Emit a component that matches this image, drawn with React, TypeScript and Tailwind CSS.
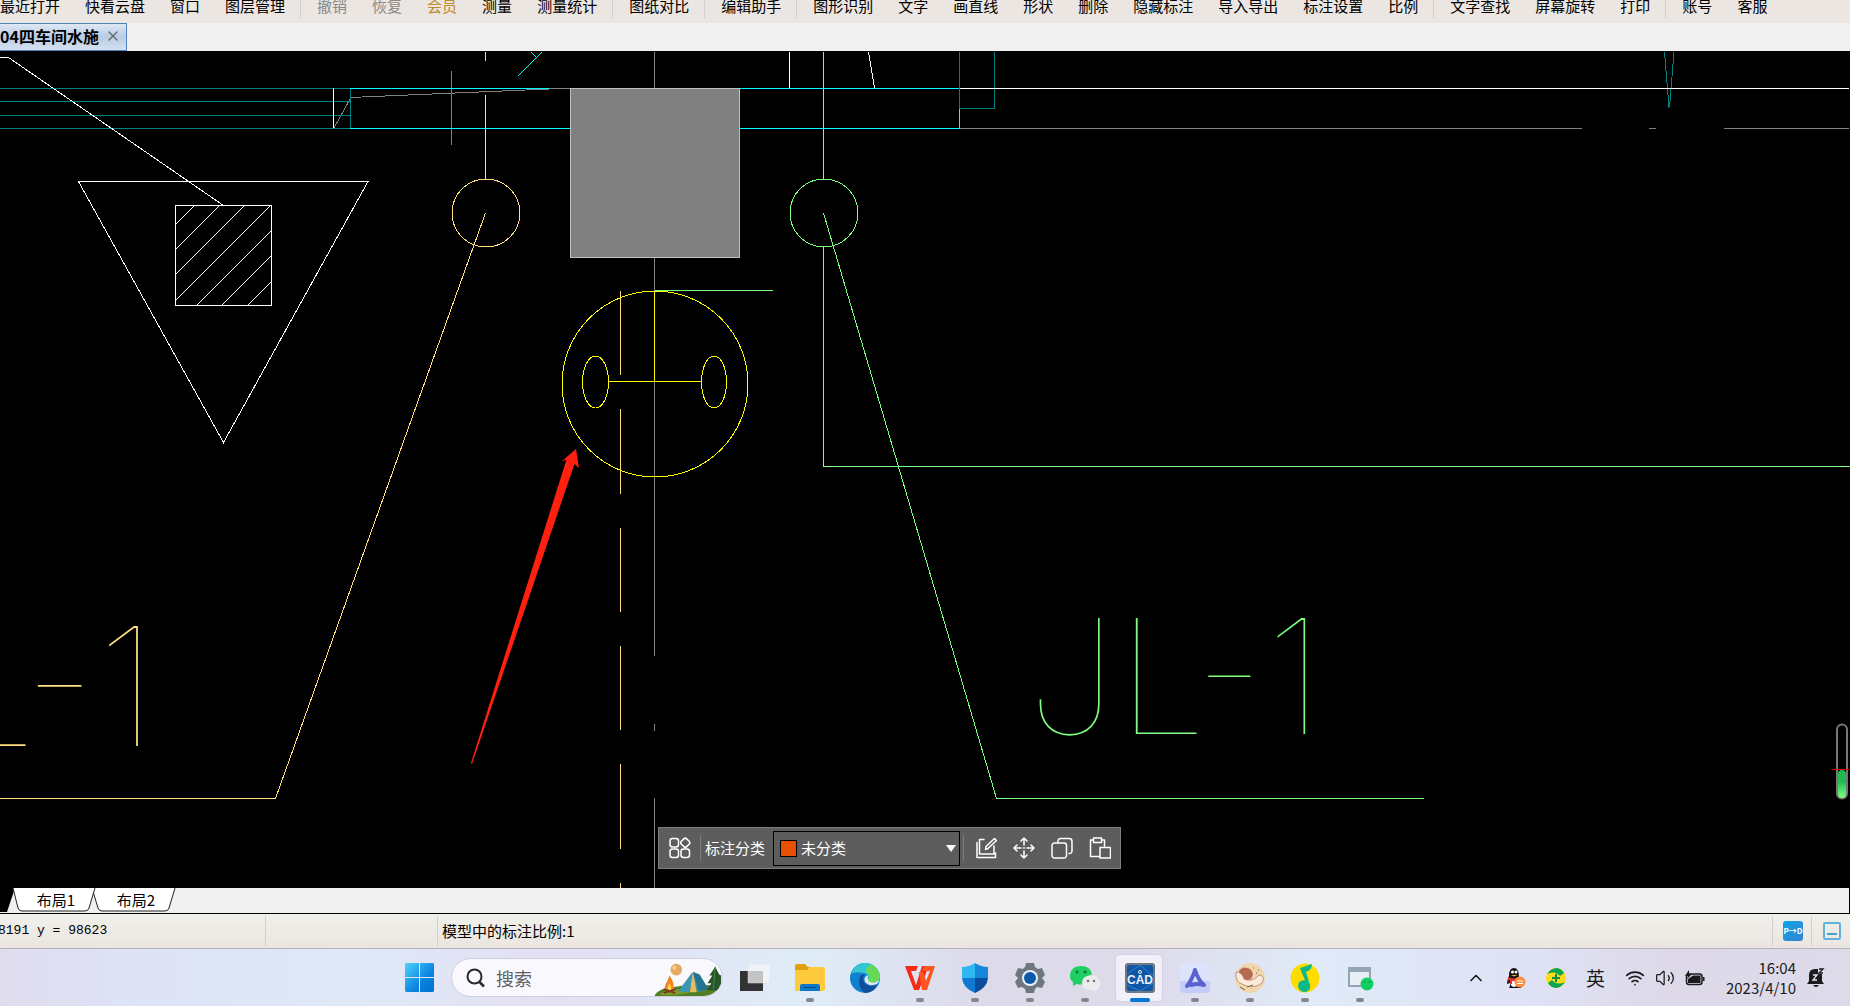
import React from 'react';
import { ChevronUp, Wifi, Volume2, X } from 'lucide-react';

type ToolItem = { label: string; tone?: 'muted' | 'gold' };

const TOOL_GROUPS: ToolItem[][] = [
  [{ label: '最近打开' }, { label: '快看云盘' }, { label: '窗口' }, { label: '图层管理' }],
  [
    { label: '撤销', tone: 'muted' }, { label: '恢复', tone: 'muted' }, { label: '会员', tone: 'gold' },
    { label: '测量' }, { label: '测量统计' },
  ],
  [{ label: '图纸对比' }],
  [{ label: '编辑助手' }],
  [
    { label: '图形识别' }, { label: '文字' }, { label: '画直线' }, { label: '形状' }, { label: '删除' },
    { label: '隐藏标注' }, { label: '导入导出' }, { label: '标注设置' }, { label: '比例' },
  ],
  [{ label: '文字查找' }, { label: '屏幕旋转' }, { label: '打印' }],
  [{ label: '账号' }, { label: '客服' }],
];

const TONES = { muted: 'text-[#8b8b8b]', gold: 'text-[#c08a28]' };

function Toolbar() {
  return (
    <nav className="flex h-[23px] overflow-hidden bg-[#ebe6e2]">
      {TOOL_GROUPS.map((group, i) => (
        <div key={i} className="flex shrink-0">
          {i > 0 && <div className="w-px h-[18px] ml-[15px] mr-4 bg-[#d2cfcc]" />}
          <div className="flex gap-[25px] -mt-1">
            {group.map(({ label, tone }) => (
              <button key={label} className={`h-5 leading-5 whitespace-nowrap ${tone ? TONES[tone] : 'text-black'}`}>
                {label}
              </button>
            ))}
          </div>
        </div>
      ))}
    </nav>
  );
}

function FileTabs() {
  return (
    <div className="flex h-7 bg-[#f0f0f0]">
      <div className="flex items-center gap-1.5 w-[127px] pb-0.5 border border-l-0 border-[#5080bd] bg-linear-to-b from-[#dfe8f4] via-[#b8cce5] to-[#d5e1f0]">
        <span className="text-base leading-5 font-bold whitespace-nowrap">04四车间水施</span>
        <button aria-label="关闭"><X className="w-4 h-4 text-[#6b6b6b]" /></button>
      </div>
    </div>
  );
}

const DASHES = [[291, 375], [409, 494], [528, 612], [646, 730], [764, 849], [883, 889]];

function Drawing() {
  return (
    <svg className="absolute inset-0 w-full h-full" fill="none" shapeRendering="crispEdges">
      <g transform="translate(0 -51)">
        <g stroke="#808080">
          <path d="M451.5 71v74M654.5 52v36M654.5 258v398M654.5 724v7M654.5 798v90" />
          <path d="M334 128L350 99M350 97.5L549 89M549 88.5h21" />
          <path d="M960 128.5h622M1649 128.5h7M1724 128.5h125" />
        </g>
        <g stroke="#008080">
          <path d="M0 88.5h350M0 101.5h350M0 115.5h350M0 128.5h350M350.5 88v41" />
          <path d="M959.5 52v57M994.5 52v56.5h-35M1664.5 52L1669 107.5M1674 52L1669.5 107.5" />
        </g>
        <path stroke="#00ffff" d="M350 88.5h199M350 128.5h220M740 88.5h219M740 128.5h219.500V109M518 76L542 52M531 52L536.500 57.500" />
        <g stroke="#fff">
          <path d="M0 57.500h8.500L223.500 205.500M333.500 88v40M789.500 52v36M868.500 52L874.500 88M960 88.500h889" />
          <path d="M78.500 181.500h289.500L223.500 442.500z" />
          <path d="M175.500 205.500h96v100h-96z" />
          <path d="M175 225L195 205M175 250L220 205M175 275L245 205M175 301L271 205M197 305L271 231M222 305L271 256M248 305L271 282" />
        </g>
        <rect x="570.500" y="88.500" width="169" height="169" fill="#808080" stroke="#c0c0c0" />
        <g stroke="#ffdf7f">
          <path d="M485.500 52v9M485.500 95v84M485.500 213L275.500 798.500H0" />
          <circle cx="486" cy="213" r="34" />
          {DASHES.map(([a, b]) => <path key={a} d={`M620.5 ${a}V${b}`} />)}
        </g>
        <g stroke="#ffff00">
          <circle cx="655" cy="384" r="93" />
          <ellipse cx="595.500" cy="382" rx="13" ry="26" />
          <ellipse cx="714" cy="382" rx="12.500" ry="26" />
          <path d="M654.500 291v90M608 381.500h93" />
        </g>
        <g stroke="#7fff7f">
          <path d="M655 290.500h118M823.500 52v127M823.500 247v219.500H1850" />
          <circle cx="824" cy="213" r="34" />
          <path d="M823.500 213L996.500 798.500H1424" />
        </g>
        {/* the black outline thins the pipe labels down to a pen line */}
        <g fontWeight="100" fontFamily="Inter, sans-serif" shapeRendering="auto" stroke="#000" strokeWidth="2">
          <text x="158" y="747" fontSize="168" fill="#ffdf7f" textAnchor="end">L-1</text>
          <text x="1026" y="735" fontSize="162" fill="#7fff7f">JL-1</text>
        </g>
        <path shapeRendering="auto" fill="#ff2010" d="M576 449L579 468L574.500 464L472 764L471 763L566.500 459.500L561.500 461.500z" />
        <g shapeRendering="auto">
          <rect x="1837" y="724.500" width="10" height="74" rx="5" stroke="#777" strokeWidth="2" />
          <rect x="1838" y="770" width="8" height="28" rx="4" fill="url(#gauge)" />
          <path stroke="#d00" d="M1832 769.500h17" />
        </g>
      </g>
      <defs>
        <linearGradient id="gauge" x1="0" y1="0" x2="0" y2="1">
          <stop offset="0.4" stopColor="#20b850" />
          <stop offset="1" stopColor="#80ff80" />
        </linearGradient>
      </defs>
    </svg>
  );
}

function GridIcon() {
  return (
    <svg viewBox="0 0 22 22" className="w-[22px] h-[22px]" fill="none" stroke="#fff" strokeWidth="1.5">
      <rect x="1" y="1.500" width="8.500" height="8.500" rx="2.500" />
      <rect x="1" y="12" width="8.500" height="8.500" rx="2.500" />
      <rect x="12" y="12" width="8.500" height="8.500" rx="2.500" />
      <rect x="12.500" y="2" width="7.500" height="7.500" rx="2" transform="rotate(45 16.250 5.750)" />
    </svg>
  );
}

const MARK_ACTIONS = [
  { label: '编辑', d: 'M9 2.500H4.500V17H19V9M2 5.500V20.500H20.500V16M10.500 12.500L11 9.500L19.500 1.500L21.500 3.500L13 11.500z' },
  { label: '移动', d: 'M11 1v7M11 14v7M1 11h7M14 11h7M8 4l3-3l3 3M8 18l3 3l3-3M4 8l-3 3l3 3M18 8l3 3l-3 3M10.500 11h1' },
  { label: '复制', d: 'M7 5V4a2.500 2.500 0 0 1 2.500-2.500H18A3 3 0 0 1 21 4.500V14a2.500 2.500 0 0 1-2.500 2.500H18M3.500 6H13a2.500 2.500 0 0 1 2.500 2.500V18.500A2.500 2.500 0 0 1 13 21H3.500A2.500 2.500 0 0 1 1 18.500V8.500A2.500 2.500 0 0 1 3.500 6z' },
  { label: '粘贴', d: 'M4.500 3H1.500V19.500H10M12.500 3H15.500V9M4.500 1H12.500V5.500H4.500zM11 10.500H21.500V21H11z' },
];

function MarkBar() {
  return (
    <div className="absolute left-[658px] bottom-[19px] flex items-center h-[42px] w-[463px] pl-2.5 border border-[#7d7d7d] bg-[#5d5d5d] text-white">
      <button aria-label="全部"><GridIcon /></button>
      <div className="w-px h-[26px] ml-[9px] mr-1 bg-[#7d7d7d]" />
      <label htmlFor="category" className="whitespace-nowrap">标注分类</label>
      <div className="relative ml-2">
        <select id="category" className="block appearance-none w-[187px] h-[35px] pl-[27px] border border-black bg-[#5d5d5d] text-white outline-none">
          <option>未分类</option>
        </select>
        <span className="absolute left-[7px] top-[9px] w-[17px] h-[17px] border border-black bg-[#e65000] pointer-events-none" />
        <svg viewBox="0 0 10 7" className="absolute right-1 top-[14px] w-2.5 h-[7px] pointer-events-none"><path d="M0 0h10L5 7z" fill="#fff" /></svg>
      </div>
      <div className="w-px h-[26px] ml-[3px] mr-[11px] bg-[#7d7d7d]" />
      <div className="flex gap-4">
        {MARK_ACTIONS.map(({ label, d }) => (
          <button key={label} aria-label={label}>
            <svg viewBox="0 0 22 22" className="w-[22px] h-[22px]" fill="none" stroke="#fff" strokeWidth="1.5" strokeLinejoin="round" strokeLinecap="round">
              <path d={d} />
            </svg>
          </button>
        ))}
      </div>
    </div>
  );
}

function LayoutTabs() {
  return (
    <div className="relative h-[26px] bg-[#f0f0f0] border-b border-r border-black">
      <svg className="absolute left-0 top-0 w-[180px] h-6">
        <path d="M0 0h15L7 24H0z" />
        <path d="M92 0L98 20Q99 23 102 23H165Q168 23 169 20L175 0" fill="#fff" stroke="#222" />
        <path d="M13 0L18 20Q19 23 22 23H85Q88 23 89 20L95 0" fill="#fff" stroke="#222" />
      </svg>
      <div className="relative flex h-full pl-4">
        <button className="w-20 h-6">布局1</button>
        <button className="w-20 h-6">布局2</button>
      </div>
    </div>
  );
}

function StatusBar() {
  return (
    <div className="flex items-center h-[35px] bg-linear-to-b from-[#f0f0eb] to-[#ebe5e0] border-b border-[#b4b3bd]">
      <div className="w-[265px] overflow-hidden whitespace-pre font-['Liberation_Mono','Noto_Sans_CJK_SC',monospace] text-[13px] -ml-0.5">8191 y = 98623</div>
      <div className="w-px h-[30px] ml-0.5 mr-[171px] bg-[#d2d0ce]" />
      <div className="w-px h-[30px] mr-1 bg-[#d2d0ce]" />
      <span>模型中的标注比例:1</span>
      <div className="flex items-center ml-auto pr-[9px]">
        <div className="w-px h-[30px] bg-[#d2d0ce]" />
        <button className="w-5 h-5 ml-2.5 mr-2 rounded-[3px] bg-linear-to-br from-[#00a5e8] to-[#3083cd] text-white text-[8px] leading-5 font-bold whitespace-nowrap">P→D</button>
        <div className="w-px h-[30px] mr-[11px] bg-[#d2d0ce]" />
        <button aria-label="命令栏" className="flex items-end justify-center w-[18px] h-[18px] pb-[3px] border-2 border-[#5fb3da] rounded-[2px]">
          <span className="w-2.5 h-[2px] bg-[#3ba3d4]" />
        </button>
      </div>
    </div>
  );
}

function CampArt() {
  return (
    <svg viewBox="0 0 68 39" className="w-[68px] h-[38px]">
      <path d="M0 37Q4 30 18 29Q45 24 68 29V38H0z" fill="#4f7f22" />
      <path d="M6 35Q25 28 40 33Q25 38 6 37z" fill="#7a9c2c" />
      <circle cx="22" cy="11" r="6" fill="#e6ab62" /><circle cx="20" cy="9" r="2" fill="#f7cf8f" />
      <path d="M38 14L24 33L35 34L39 20L44 34L55 31L45 16z" fill="#3c97b5" />
      <path d="M39 13L36 34H43z" fill="#e8bd5f" /><path d="M39 13L45 33L55 31L46 16z" fill="#24728f" />
      <path d="M15 17Q20 24 19 29Q23 33 15 34Q8 33 11 26Q13 23 15 17z" fill="#f58220" />
      <path d="M15 25Q19 32 15 33Q11 31 15 25z" fill="#ffd34a" />
      <path d="M9 35L21 31M9 31L21 35" stroke="#7b3f1d" strokeWidth="2" />
      <path d="M62 8L56 17H59L54 25H58L53 32H68V17L66 16z" fill="#25542d" /><path d="M62 8L60 31" stroke="#4f8a3a" />
    </svg>
  );
}

function TaskIcon({ name }: { name: string }) {
  switch (name) {
    case '任务视图':
      return <><path d="M0 8h23v20H0z" fill="#303234" /><path d="M8 1h22v19H8z" fill="#f5f5f5" fillOpacity="0.75" stroke="#ddd" strokeWidth="0.5" /></>;
    case '文件资源管理器':
      return <><path d="M0 3q0-2 2-2h8l3 3h16v8H0z" fill="#e2a00e" /><path d="M0 7h12l3-3h13q2 0 2 2v20q0 2-2 2H0z" fill="#ffcb3d" /><path d="M5 28v-5q0-2 2-2h16q2 0 2 2v5z" fill="#0b78c8" /><path d="M9 24.500h12" stroke="#064a86" /></>;
    case 'Edge':
      return (
        <>
          <circle cx="15" cy="15" r="15" fill="#0f7fd0" />
          <path d="M1 11C4 3 10 0 15 0C24 0 30 7 30 14Q29 20 22 20Q17 20 18 17Q20 11 13 10Q6 8 1 11z" fill="#32c7d3" />
          <path d="M20 1Q30 5 30 14Q29 20 22 20Q17 20 18 17Q21 12 15 8z" fill="#66d957" />
          <path d="M9 19Q9 11 15 11Q12 15 14 19Q18 25 27 22Q23 30 15 30Q9 26 9 19z" fill="#12509c" />
          <path d="M18 12Q13 14 15 19Q19 24 27 21Q29 19 29.500 17Q25 21 20 19Q17 18 18 12z" fill="#e2e6f4" />
        </>
      );
    case 'WPS':
      return <><path d="M0 3h13l-2 5H6l5 14L17 3h7L14 27H9z" fill="#f52b16" /><path d="M14 9h4l3 9L25 8h-8l2-5h11L22 27h-5z" fill="#ff5422" /></>;
    case '安全中心':
      return <><path d="M15 0Q9 4 2 4v11h13z" fill="#2fb7f1" /><path d="M15 0Q21 4 28 4v11H15z" fill="#1687db" /><path d="M2 15h13v15Q3 25 2 15z" fill="#0f7ad2" /><path d="M28 15H15v15Q27 25 28 15z" fill="#0a4d9e" /></>;
    case '设置':
      return (
        <>
          <path d="M11 0h8l1 4l3 2l4-1l3 7l-3 3l3 4l-3 6l-5-1l-2 2l-1 4h-8l-1-4l-3-2l-4 1l-3-6l3-4l-3-3l3-7l5 1l2-2z" fill="#6e7780" />
          <circle cx="15" cy="15" r="8" fill="#e9f0f6" /><circle cx="15" cy="15" r="6" fill="#0b5aa8" />
        </>
      );
    case '微信':
      return (
        <>
          <path d="M11 3C4 3 0 7 0 13q0 4 3 6v4l4-2q4 1 8 0q7-2 7-9Q21 3 11 3z" fill="#1fcf63" /><circle cx="7" cy="9" r="1.500" fill="#166b38" /><circle cx="15" cy="9" r="1.500" fill="#166b38" />
          <path d="M21 12q-9 1-9 8t9 7l5 1l2-2q2-2 2-6q-1-8-9-8z" fill="#ececec" /><circle cx="18" cy="18" r="1.300" fill="#777" /><circle cx="24" cy="18" r="1.300" fill="#777" />
        </>
      );
    case '快看CAD':
      return (
        <>
          <rect width="30" height="30" rx="3" fill="#6f7780" /><rect x="2" y="2" width="26" height="26" rx="3" fill="#0f57a6" />
          <path d="M2 11L15 2L28 13M2 22L15 28L28 20" stroke="#2c83cf" fill="none" />
          <text x="15" y="21" textAnchor="middle" fontSize="12" fontWeight="700" fontFamily="Liberation Sans, sans-serif" fill="#e8f1fa">CAD</text>
          <circle cx="15" cy="9" r="1.500" fill="none" stroke="#e8f1fa" />
        </>
      );
    case '笔记':
      return <><rect width="30" height="30" rx="5" fill="#dde3fb" /><path d="M0 18h30v8q0 4-4 4H4q-4 0-4-4z" fill="#c4cdf8" /><path d="M7 23Q12 17 15 7Q18 17 24 22Q17 20 11 22" fill="none" stroke="#5a62cf" strokeWidth="4" strokeLinejoin="round" strokeLinecap="round" /></>;
    case '画板':
      return (
        <>
          <circle cx="15" cy="15" r="15" fill="#f1d5ac" />
          <path d="M4 8Q8 2 15 6Q20 10 16 16Q9 19 5 14z" fill="#b76a52" /><path d="M1 9Q7 9 9 16Q17 20 24 12Q31 13 27 20Q17 27 7 21Q0 19 1 9z" fill="#fbeadb" stroke="#a77963" strokeWidth="0.700" />
          <path d="M18 5h1M23 7h1M21 10h1M12 24l6-2M5 24l5 3" stroke="#80604b" />
        </>
      );
    case '音乐':
      return <><circle cx="15" cy="15" r="14.500" fill="#ffdc00" /><path d="M22 1L10 5Q12 11 15 17Q8 17 8 23Q9 29 15 29Q21 28 20 22L16 9Q22 7 22 1z" fill="#0fb987" /></>;
    default:
      return <><path d="M3 4h23v20H3z" fill="#93a4b5" /><path d="M5 9h19v13H5z" fill="#e8eef5" /><circle cx="22" cy="21" r="6.500" fill="#10cf62" /><path d="M19 19h1M24 19h1" stroke="#087a38" strokeWidth="1.500" /></>;
  }
}

const TASKS = ['任务视图', '文件资源管理器', 'Edge', 'WPS', '安全中心', '设置', '微信', '快看CAD', '笔记', '画板', '音乐', '远程窗口'];
const IDLE = ['任务视图', 'Edge'];

function Taskbar() {
  return (
    <footer className="flex items-center h-[57px] pl-[392px] pr-[25px] bg-[linear-gradient(90deg,#dfdcee_0%,#dde3f5_7%,#dfe9f8_19%,#e3e0f3_30%,#dfecf8_44%,#dddaea_53%,#dddaea_61%,#e0eaf8_71%,#dfe2f5_83%,#ddd9e9_90%,#dddaea_100%)]">
      <button aria-label="开始" className="flex justify-center w-[55px]">
        <svg viewBox="0 0 29 29" className="w-[29px] h-[29px]">
          <defs>
            <linearGradient id="win" x1="0" y1="0" x2="1" y2="1"><stop stopColor="#50d2ff" /><stop offset="0.6" stopColor="#0b84df" /><stop offset="1" stopColor="#0070cc" /></linearGradient>
          </defs>
          <path d="M1 0h13v14H0V1zM15 0h13l1 1v13H15zM0 15h14v14H1l-1-1zM15 15h14v13l-1 1H15z" fill="url(#win)" />
        </svg>
      </button>
      <label className="flex items-center w-[272px] h-[39px] mx-1 pl-3.5 rounded-full overflow-hidden bg-[#f8f8fd] border border-[#cfcde0]">
        <svg viewBox="0 0 20 20" className="w-5 h-5 shrink-0" fill="none" stroke="#2a2a2a" strokeWidth="2"><circle cx="8.500" cy="8.500" r="7" /><path d="M13.500 14L18 18.500" strokeWidth="2.500" /></svg>
        <input aria-label="搜索" placeholder="搜索" className="min-w-0 flex-1 ml-2.5 text-lg placeholder:text-[#606066] outline-none bg-transparent" />
        <CampArt />
      </label>
      {TASKS.map((name) => {
        const active = name === '快看CAD';
        return (
          <button key={name} aria-label={name} className="relative flex items-center justify-center w-[55px] h-[57px]">
            {active && <span className="absolute left-[3px] top-[5px] w-[48px] h-[48px] rounded-[5px] bg-[#f1f0f8] border border-[#d5d3e3]" />}
            <svg viewBox="0 0 30 30" className="relative w-[30px] h-[30px]"><TaskIcon name={name} /></svg>
            {!IDLE.includes(name) && (
              <span className={`absolute bottom-1 left-1/2 -translate-x-1/2 h-1 rounded-full ${active ? 'w-5 bg-[#0078d4]' : 'w-2 bg-[#85858d]'}`} />
            )}
          </button>
        );
      })}
      <div className="flex items-center ml-auto text-[#1b1b1b]">
        <button aria-label="显示隐藏的图标"><ChevronUp className="w-5 h-5" /></button>
        <button aria-label="QQ" className="ml-5">
          <svg viewBox="0 0 20 20" className="w-5 h-5">
            <path d="M2 10Q1 15 1 16L4 15V18L3 20H15Q17 14 13 9Q13 0 8 0Q3 0 3 8z" fill="#151515" />
            <path d="M5 12Q8 14 12 11Q14 18 8 19Q3 18 5 12z" fill="#fff" /><path d="M2 9Q8 12 13 9V12Q8 14 6 13V16H4V12H2z" fill="#e83030" />
            <circle cx="6.500" cy="4" r="1.500" fill="#fff" /><circle cx="10" cy="4" r="1.500" fill="#fff" /><path d="M5 7h6.500L8 8.500z" fill="#f7b51d" />
            <circle cx="14" cy="14" r="5.500" fill="#ff8e42" /><path d="M11 13h6M11 15.500h6" stroke="#fff" />
          </svg>
        </button>
        <button aria-label="安全卫士" className="ml-5">
          <svg viewBox="0 0 20 20" className="w-5 h-5">
            <circle cx="10" cy="10" r="10" fill="#ffdc18" /><path d="M1 6Q5 0 11 0Q16 1 18 5L14 8Q9 2 1 6zM19 14Q15 20 9 20Q4 19 2 15L6 12Q11 18 19 14z" fill="#0aa653" />
            <path d="M10 6v8M6 10h8" stroke="#0b8a45" strokeWidth="2" />
          </svg>
        </button>
        <button className="ml-5 text-[19px] leading-6">英</button>
        <button aria-label="网络和电池" className="flex items-center gap-2.5 ml-5">
          <Wifi className="w-5 h-5" strokeWidth={2} />
          <Volume2 className="w-5 h-5" strokeWidth={1.5} />
          <svg viewBox="0 0 20 16" className="w-5 h-4"><rect x="1.500" y="4" width="15.500" height="10.500" rx="2.500" fill="none" stroke="#1b1b1b" strokeWidth="1.500" /><path d="M3 9L8 5.500H15.500V13H3zM18 7h1.500v4H18zM4 0L0 6h3L2 9L7 4H4z" fill="#1b1b1b" /></svg>
        </button>
        <button className="ml-[21px] text-right leading-5">
          <span className="block">16:04</span>
          <span className="block">2023/4/10</span>
        </button>
        <button aria-label="通知" className="ml-[11px]">
          <svg viewBox="0 0 18 20" className="w-[18px] h-5">
            <path d="M2 13V7Q2 1 8 1H11V6H15V13L17 16H0zM6 17h6q-3 4-6 0z" fill="#1b1b1b" />
            <path d="M6 7h4l-4 5h4" stroke="#e9e7f2" strokeWidth="1.300" fill="none" /><path d="M12 1h4l-4 4h4" stroke="#1b1b1b" strokeWidth="1.300" fill="none" />
          </svg>
        </button>
      </div>
    </footer>
  );
}

export default function App() {
  return (
    <div className="flex flex-col min-h-screen overflow-hidden bg-[#f0f0f0] text-[15px] leading-5 text-black font-['Noto_Sans_CJK_SC',sans-serif]">
      <Toolbar />
      <FileTabs />
      <main className="relative flex-1 bg-black overflow-hidden">
        <Drawing />
        <MarkBar />
      </main>
      <LayoutTabs />
      <StatusBar />
      <Taskbar />
    </div>
  );
}
